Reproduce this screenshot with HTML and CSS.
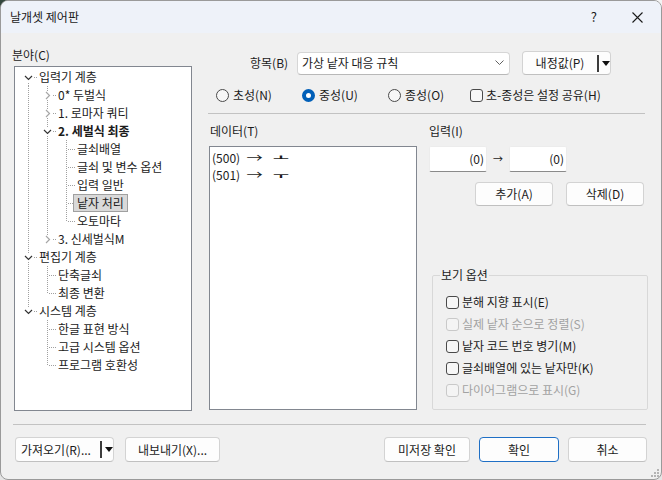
FILE: index.html
```html
<!DOCTYPE html>
<html>
<head>
    <meta charset="utf-8">
    <title>날개셋 제어판</title>
    <link rel="stylesheet" href="styles.css">
</head>
<body>
    <div id="dialog">
        <div class="titlebar">
            <span class="title">날개셋 제어판</span>
            <span class="help">?</span>
            <span class="close">
                <svg width="11" height="11" viewBox="0 0 11 11"><path d="M0.5 0.5L10.5 10.5M10.5 0.5L0.5 10.5" stroke="#1a1a1a" stroke-width="1.1"/></svg>
            </span>
        </div>

        <div class="main">
            <div class="left">
                <div class="label">분야(C)</div>
                <div class="tree">
                    <div class="row"><span class="c top"><svg class="chev" width="9" height="9" viewBox="0 0 9 9"><rect width="9" height="9" fill="#fff"/><path d="M1 3L4.5 6.5L8 3" fill="none" stroke="#333" stroke-width="1.2"/></svg></span><span class="t">입력기 계층</span></div>
                    <div class="row"><span class="c pipe"></span><span class="c tee"><svg class="chev" width="9" height="9" viewBox="0 0 9 9"><rect width="9" height="9" fill="#fff"/><path d="M3 1L6.5 4.5L3 8" fill="none" stroke="#a6a6a6" stroke-width="1.2"/></svg></span><span class="t">0* 두벌식</span></div>
                    <div class="row"><span class="c pipe"></span><span class="c tee"><svg class="chev" width="9" height="9" viewBox="0 0 9 9"><rect width="9" height="9" fill="#fff"/><path d="M3 1L6.5 4.5L3 8" fill="none" stroke="#a6a6a6" stroke-width="1.2"/></svg></span><span class="t">1. 로마자 쿼티</span></div>
                    <div class="row"><span class="c pipe"></span><span class="c tee"><svg class="chev" width="9" height="9" viewBox="0 0 9 9"><rect width="9" height="9" fill="#fff"/><path d="M1 3L4.5 6.5L8 3" fill="none" stroke="#333" stroke-width="1.2"/></svg></span><span class="t bold">2. 세벌식 최종</span></div>
                    <div class="row"><span class="c pipe"></span><span class="c pipe"></span><span class="c tee"></span><span class="t">글쇠배열</span></div>
                    <div class="row"><span class="c pipe"></span><span class="c pipe"></span><span class="c tee"></span><span class="t">글쇠 및 변수 옵션</span></div>
                    <div class="row"><span class="c pipe"></span><span class="c pipe"></span><span class="c tee"></span><span class="t">입력 일반</span></div>
                    <div class="row"><span class="c pipe"></span><span class="c pipe"></span><span class="c tee"></span><span class="t selected">낱자 처리</span></div>
                    <div class="row"><span class="c pipe"></span><span class="c pipe"></span><span class="c ell"></span><span class="t">오토마타</span></div>
                    <div class="row"><span class="c pipe"></span><span class="c ell"><svg class="chev" width="9" height="9" viewBox="0 0 9 9"><rect width="9" height="9" fill="#fff"/><path d="M3 1L6.5 4.5L3 8" fill="none" stroke="#a6a6a6" stroke-width="1.2"/></svg></span><span class="t">3. 신세벌식M</span></div>
                    <div class="row"><span class="c tee"><svg class="chev" width="9" height="9" viewBox="0 0 9 9"><rect width="9" height="9" fill="#fff"/><path d="M1 3L4.5 6.5L8 3" fill="none" stroke="#333" stroke-width="1.2"/></svg></span><span class="t">편집기 계층</span></div>
                    <div class="row"><span class="c pipe"></span><span class="c tee"></span><span class="t">단축글쇠</span></div>
                    <div class="row"><span class="c pipe"></span><span class="c ell"></span><span class="t">최종 변환</span></div>
                    <div class="row"><span class="c ell"><svg class="chev" width="9" height="9" viewBox="0 0 9 9"><rect width="9" height="9" fill="#fff"/><path d="M1 3L4.5 6.5L8 3" fill="none" stroke="#333" stroke-width="1.2"/></svg></span><span class="t">시스템 계층</span></div>
                    <div class="row"><span class="c"></span><span class="c tee"></span><span class="t">한글 표현 방식</span></div>
                    <div class="row"><span class="c"></span><span class="c tee"></span><span class="t">고급 시스템 옵션</span></div>
                    <div class="row"><span class="c"></span><span class="c ell"></span><span class="t">프로그램 호환성</span></div>
                </div>
            </div>

            <div class="right">
                <div class="item-row">
                    <span class="item-label">항목(B)</span>
                    <div class="combo">
                        <span>가상 낱자 대응 규칙</span>
                        <svg width="9" height="6" viewBox="0 0 9 6"><path d="M0.5 0.5L4.5 4.5L8.5 0.5" fill="none" stroke="#606060" stroke-width="1"/></svg>
                    </div>
                    <div class="btn split default-btn">
                        <span class="split-text">내정값(P)</span>
                        <span class="split-bar"></span>
                        <span class="tri"></span>
                    </div>
                </div>

                <div class="radio-row">
                    <label class="opt w86"><span class="radio"></span>초성(N)</label>
                    <label class="opt w86"><span class="radio on"></span>중성(U)</label>
                    <label class="opt w82"><span class="radio"></span>종성(O)</label>
                    <label class="opt"><span class="check"></span>초-종성은 설정 공유(H)</label>
                </div>

                <div class="sep"></div>

                <div class="panes">
                    <div class="data">
                        <div class="pane-label">데이터(T)</div>
                        <div class="list">
                            <div class="entry">(500) <span class="arrow">→</span> <span class="jamo lo">ㅗ</span></div>
                            <div class="entry">(501) <span class="arrow">→</span> <span class="jamo hi">ㅜ</span></div>
                        </div>
                    </div>
                    <div class="input">
                        <div class="pane-label">입력(I)</div>
                        <div class="fields">
                            <div class="field">(0)</div>
                            <span class="small-arrow">→</span>
                            <div class="field">(0)</div>
                        </div>
                        <div class="actions">
                            <div class="btn">추가(A)</div>
                            <div class="btn">삭제(D)</div>
                        </div>
                        <fieldset class="group">
                            <legend>보기 옵션</legend>
                            <label class="opt line"><span class="check"></span>분해 지향 표시(E)</label>
                            <label class="opt line off"><span class="check"></span>실제 낱자 순으로 정렬(S)</label>
                            <label class="opt line"><span class="check"></span>낱자 코드 번호 병기(M)</label>
                            <label class="opt line"><span class="check"></span>글쇠배열에 있는 낱자만(K)</label>
                            <label class="opt line off"><span class="check"></span>다이어그램으로 표시(G)</label>
                        </fieldset>
                    </div>
                </div>
            </div>
        </div>

        <div class="sep footer-sep"></div>

        <div class="footer">
            <div class="btn split import">
                <span class="split-text">가져오기(R)...</span>
                <span class="split-bar"></span>
                <span class="tri"></span>
            </div>
            <div class="btn export">내보내기(X)...</div>
            <div class="btn unsaved">미저장 확인</div>
            <div class="btn ok">확인</div>
            <div class="btn cancel">취소</div>
        </div>

        <svg class="grip" width="9" height="9" viewBox="0 0 9 9">
            <rect x="6" y="0" width="2" height="2" fill="#b4b4b4"/>
            <rect x="3" y="3" width="2" height="2" fill="#b4b4b4"/>
            <rect x="6" y="3" width="2" height="2" fill="#b4b4b4"/>
            <rect x="0" y="6" width="2" height="2" fill="#b4b4b4"/>
            <rect x="3" y="6" width="2" height="2" fill="#b4b4b4"/>
            <rect x="6" y="6" width="2" height="2" fill="#b4b4b4"/>
        </svg>
    </div>
</body>
</html>
```

FILE: styles.css
```css
html, body {
    margin: 0;
    padding: 0;
}
body {
    width: 662px;
    height: 480px;
    background: linear-gradient(to right, #33473d 275px, #f4f4f4 275px) top / 100% 20px no-repeat, #e4e4e4;
    font-family: "Noto Sans CJK KR", "Noto Sans", sans-serif;
    font-size: 12px;
    color: #1b1b1b;
    user-select: none;
}
#dialog {
    position: relative;
    width: 662px;
    height: 480px;
    box-sizing: border-box;
    border: 1px solid #9a9a9a;
    border-radius: 8px;
    background: #f0f0f0;
    overflow: hidden;
    display: flex;
    flex-direction: column;
}

/* title bar */
.titlebar {
    height: 32px;
    flex: none;
    background: #eef2f9;
    display: flex;
    align-items: center;
    padding-left: 9px;
    line-height: 16px;
}
.help {
    margin-left: auto;
    margin-right: 35px;
    font-size: 13px;
}
.close {
    display: flex;
    margin-right: 18px;
}

/* main area */
.main {
    display: flex;
    padding: 0 13px 0 11px;
    line-height: 16px;
}
.left {
    width: 180px;
    flex: none;
}
.label {
    margin-top: 14px;
}
.tree {
    margin: 3px 0 0 2px;
    width: 178px;
    height: 345px;
    box-sizing: border-box;
    border: 1px solid #828790;
    background: #fff;
    padding: 1px 0 0 6px;
}
.row {
    display: flex;
    align-items: center;
    height: 18px;
}
.c {
    width: 19px;
    height: 18px;
    flex: none;
    display: flex;
    align-items: center;
}
.chev {
    margin-left: 3px;
}
.pipe {
    background: repeating-linear-gradient(#a0a0a0 0 1px, transparent 1px 2px) 7px 0 / 1px 18px no-repeat;
}
.tee {
    background:
        repeating-linear-gradient(90deg, #a0a0a0 0 1px, transparent 1px 2px) 9px 9px / 8px 1px no-repeat,
        repeating-linear-gradient(#a0a0a0 0 1px, transparent 1px 2px) 7px 0 / 1px 18px no-repeat;
}
.ell {
    background:
        repeating-linear-gradient(90deg, #a0a0a0 0 1px, transparent 1px 2px) 9px 9px / 8px 1px no-repeat,
        repeating-linear-gradient(#a0a0a0 0 1px, transparent 1px 2px) 7px 0 / 1px 9px no-repeat;
}
.top {
    background:
        repeating-linear-gradient(90deg, #a0a0a0 0 1px, transparent 1px 2px) 9px 9px / 8px 1px no-repeat,
        repeating-linear-gradient(#a0a0a0 0 1px, transparent 1px 2px) 7px 9px / 1px 9px no-repeat;
}
.t {
    margin-left: -5px;
    padding: 0 3px;
    border: 1px solid transparent;
    white-space: nowrap;
    line-height: 16px;
}
.bold {
    font-weight: bold;
}
.selected {
    background: #d9d9d9;
    border-color: #a0a0a0;
}

/* right side */
.right {
    margin-left: 16px;
    width: 440px;
}
.item-row {
    display: flex;
    align-items: center;
    margin-top: 18px;
    height: 24px;
}
.item-label {
    width: 47px;
    padding-left: 42px;
    flex: none;
}
.combo {
    width: 213px;
    height: 23px;
    box-sizing: border-box;
    border: 1px solid #d6d6d6;
    border-bottom-color: #b8b8b8;
    border-radius: 4px;
    background: #fff;
    display: flex;
    align-items: center;
    justify-content: space-between;
    padding: 0 5px 0 4px;
}
.btn {
    height: 24px;
    box-sizing: border-box;
    border: 1px solid #d3d3d3;
    border-bottom-color: #c0c0c0;
    border-radius: 4px;
    background: #fdfdfd;
    display: flex;
    align-items: center;
    justify-content: center;
    flex: none;
}
.split {
    justify-content: flex-start;
}
.default-btn {
    width: 89px;
    margin-left: 12px;
}
.default-btn .split-text {
    width: 76px;
    text-align: center;
}
.split-bar {
    width: 2px;
    height: 17px;
    background: #3c3c3c;
}
.tri {
    margin-left: 3px;
    border-left: 4px solid transparent;
    border-right: 4px solid transparent;
    border-top: 5px solid #111;
}

.radio-row {
    display: flex;
    align-items: center;
    margin-top: 12px;
    padding-left: 8px;
    height: 16px;
}
.opt {
    display: flex;
    align-items: center;
    white-space: nowrap;
}
.w86 {
    width: 86px;
}
.w82 {
    width: 82px;
}
.radio {
    width: 13px;
    height: 13px;
    box-sizing: border-box;
    border: 1px solid #4a4a4a;
    border-radius: 50%;
    background: #f7f7f7;
    margin-right: 4px;
    flex: none;
}
.radio.on {
    border: 4px solid #005fb8;
    background: #fff;
}
.check {
    width: 13px;
    height: 13px;
    box-sizing: border-box;
    border: 1px solid #4a4a4a;
    border-radius: 3px;
    background: #f7f7f7;
    margin-right: 3px;
    flex: none;
}
.sep {
    height: 1px;
    background: #c2c2c2;
    flex: none;
}
.right .sep {
    margin-top: 10px;
    width: 437px;
}

.panes {
    display: flex;
    margin-top: 9px;
}
.data {
    width: 209px;
    flex: none;
}
.pane-label {
    padding-left: 2px;
}
.input .pane-label {
    padding-left: 0;
}
.list {
    margin: 7px 0 0 1px;
    width: 208px;
    height: 264px;
    box-sizing: border-box;
    border: 1px solid #828790;
    background: #fff;
    padding: 2px 0 0 2px;
}
.entry {
    display: flex;
    align-items: center;
    height: 17px;
    line-height: 17px;
    white-space: nowrap;
}
.arrow {
    display: inline-block;
    width: 17px;
    margin-left: 6px;
    transform: scaleX(1.35);
    text-align: center;
}
.jamo {
    display: inline-block;
    width: 12px;
    margin-left: 12px;
    text-align: center;
    font-weight: bold;
    transform: scale(1.45, 0.6);
}
.jamo.lo {
    transform: translateY(-1px) scale(1.45, 0.6);
}
.jamo.hi {
    transform: translateY(0) scale(1.45, 0.6);
}
.input {
    margin-left: 12px;
    width: 219px;
}
.fields {
    display: flex;
    align-items: center;
    margin-top: 7px;
}
.field {
    width: 58px;
    height: 26px;
    box-sizing: border-box;
    background: #fff;
    border: 1px solid #ececec;
    border-bottom-color: #8a8a8a;
    border-radius: 2px;
    text-align: right;
    padding-right: 2px;
    line-height: 24px;
}
.small-arrow {
    width: 22px;
    text-align: center;
    font-size: 10px;
}
.actions {
    display: flex;
    margin: 10px 0 0 46px;
    gap: 13px;
}
.actions .btn {
    width: 78px;
}
.group {
    margin: 61px 0 0 3px;
    width: 216px;
    height: 143px;
    box-sizing: border-box;
    border: 1px solid #d8d8d8;
    border-radius: 2px;
    padding: 8px 0 0 13px;
}
.group legend {
    margin-left: -6px;
    padding: 0 1px;
    line-height: 16px;
}
.line {
    height: 22px;
}
.off {
    color: #a2a2a2;
}
.off .check {
    border-color: #c9c9c9;
    background: #f4f4f4;
}

/* footer */
.footer-sep {
    margin: 13px 15px 0 12px;
}
.footer {
    display: flex;
    margin-top: 12px;
    padding: 0 14px;
    line-height: 16px;
}
.footer .btn {
    height: 25px;
}
.import {
    width: 99px;
    padding-left: 5px;
}
.import .split-text {
    width: 80px;
}
.export {
    width: 95px;
    margin-left: 11px;
}
.unsaved {
    width: 86px;
    margin-left: auto;
}
.ok {
    width: 80px;
    margin-left: 9px;
    border: 1px solid #1f6fc5;
}
.cancel {
    width: 79px;
    margin-left: 9px;
}
.grip {
    position: absolute;
    right: 1px;
    bottom: 1px;
}
```
